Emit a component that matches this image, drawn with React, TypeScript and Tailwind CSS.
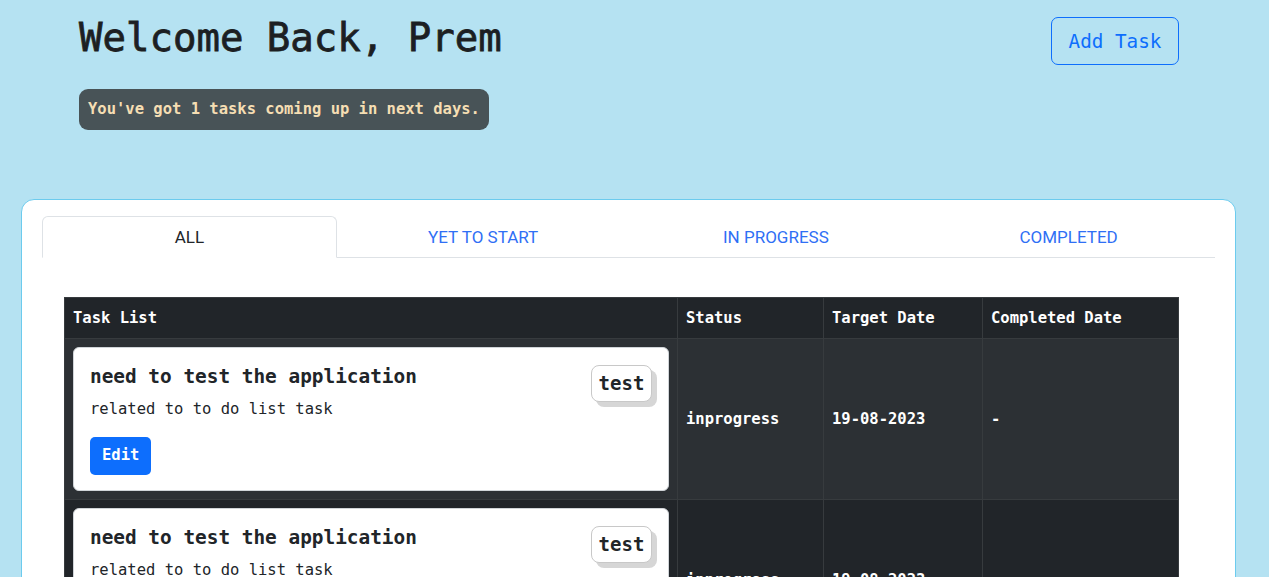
import React from "react"

const mono = "font-['DejaVu_Sans_Mono','Liberation_Mono',monospace]"

const tabs = ["ALL", "YET TO START", "IN PROGRESS", "COMPLETED"]

const tasks = [
  { title: "need to test the application", desc: "related to to do list task", tag: "test", status: "inprogress", target: "19-08-2023", done: "-" },
  { title: "need to test the application", desc: "related to to do list task", tag: "test", status: "inprogress", target: "19-08-2023", done: "-" },
]

function TaskCard({ title, desc, tag }: { title: string; desc: string; tag: string }) {
  return (
    <div className="flex justify-between rounded-[6px] border border-[#d0d4d8] bg-white px-4 pb-[15px] pt-[17px] text-[#212529]">
      <div>
        <h5 className="mb-2 text-[19.4px] font-semibold leading-[24px]">{title}</h5>
        <p className="mb-[16px] text-[15.5px] leading-[24px]">{desc}</p>
        <button
          type="button"
          className="h-[38px] rounded-[5px] bg-[#0d6efd] px-[12px] text-[15.5px] font-semibold text-white"
        >
          Edit
        </button>
      </div>
      <div>
        <span className="flex h-[37px] w-[61px] items-center justify-center rounded-[8px] border border-[#c8c8c8] bg-white text-[19px] font-bold shadow-[5px_5px_0_#d6d6d6]">
          {tag}
        </span>
      </div>
    </div>
  )
}

export default function App() {
  return (
    <div className={`min-h-screen bg-[#b5e2f2] pb-10 ${mono}`}>
      <header className="flex items-start justify-between pl-[79px] pr-[90px]">
        <div>
          <h1 className="mt-[14px] text-[39px] font-medium leading-[47px] text-[#1c1f23] [-webkit-text-stroke:0.8px_#1c1f23]">
            Welcome Back, Prem
          </h1>
          <div className="mt-[28px] inline-flex h-[41px] items-center rounded-[9px] bg-[#485357] px-[9px] pt-px text-[15.5px] font-bold text-[#f5deb3]">
            You've got 1 tasks coming up in next days.
          </div>
        </div>
        <button
          type="button"
          className="mt-[17px] flex h-[48px] w-[128px] items-center justify-center rounded-[7px] border border-[#0d6efd] pt-[3px] text-[19.3px] text-[#0d6efd]"
        >
          Add Task
        </button>
      </header>

      <section className="ml-[21px] mr-[33px] mt-[69px] rounded-[13px] border border-[#6ccbee] bg-white px-[20px] pb-10 pt-[16px]">
        <div className="flex border-b border-[#dee2e6] font-['Roboto',sans-serif] text-[17px]">
          {tabs.map((tab, i) => (
            <div
              key={tab}
              className={
                i === 0
                  ? "-mb-px flex h-[42px] flex-1 items-center justify-center rounded-t-[6px] border border-[#dee2e6] border-b-white bg-white pt-[2px] text-[#212529]"
                  : "flex h-[41px] flex-1 items-center justify-center pt-[2px] text-[#2f6ff5]"
              }
            >
              {tab}
            </div>
          ))}
        </div>

        <div className="pl-[22px] pr-[36px] pt-[39px]">
          <table className="w-full table-fixed border-collapse text-[15.5px] text-white">
            <colgroup>
              <col className="w-[613px]" />
              <col className="w-[146px]" />
              <col className="w-[159px]" />
              <col />
            </colgroup>
            <thead>
              <tr className="h-[41px] bg-[#212529] text-left">
                {["Task List", "Status", "Target Date", "Completed Date"].map((h) => (
                  <th key={h} className="border border-[#373b3e] px-2 pt-[2px] font-bold">
                    {h}
                  </th>
                ))}
              </tr>
            </thead>
            <tbody>
              {tasks.map((t, i) => (
                <tr key={i} className={i % 2 === 0 ? "bg-[#2c3034]" : "bg-[#212529]"}>
                  <td className="border border-[#373b3e] p-2">
                    <TaskCard title={t.title} desc={t.desc} tag={t.tag} />
                  </td>
                  <td className="border border-[#373b3e] px-2 pt-[2px] font-semibold">{t.status}</td>
                  <td className="border border-[#373b3e] px-2 pt-[2px] font-semibold">{t.target}</td>
                  <td className="border border-[#373b3e] px-2 pt-[2px] font-semibold">{t.done}</td>
                </tr>
              ))}
            </tbody>
          </table>
        </div>
      </section>
    </div>
  )
}
